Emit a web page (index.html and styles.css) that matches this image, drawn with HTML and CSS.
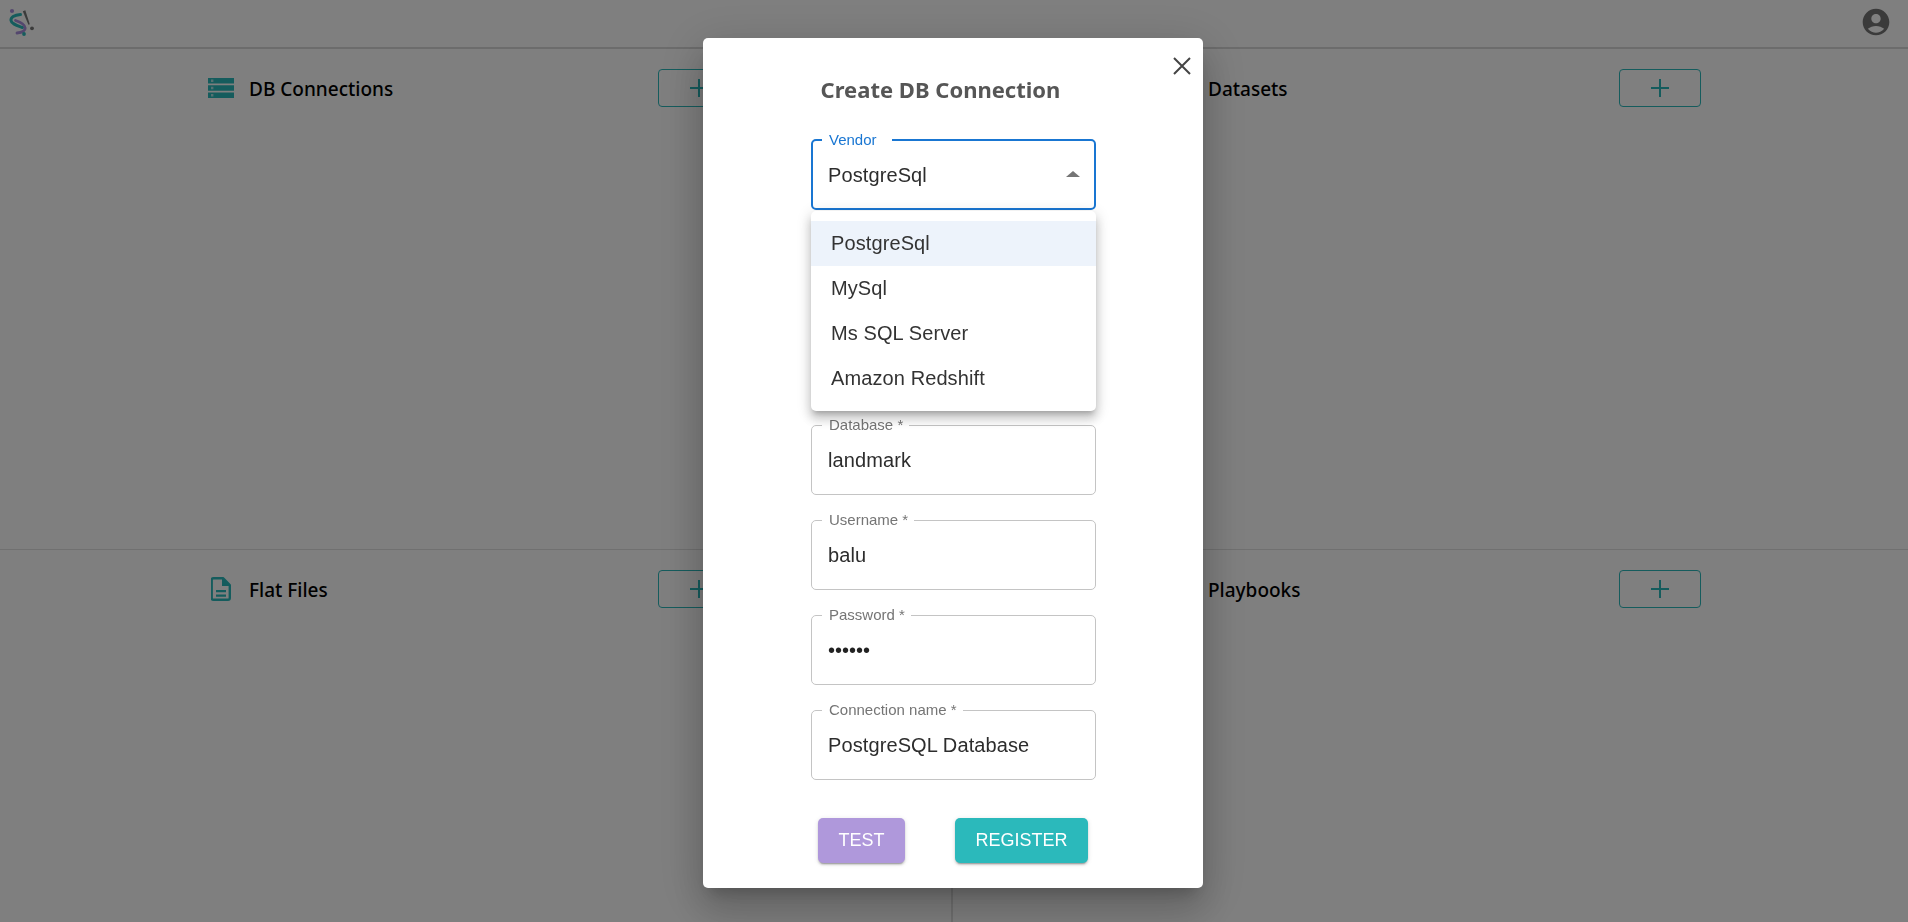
FILE: index.html
```html
<!DOCTYPE html>
<html lang="en">
<head>
<meta charset="utf-8">
<title>DB Connections</title>
<link rel="stylesheet" href="styles.css">
</head>
<body>
<div class="page">
  <header class="topbar">
    <svg class="logo" viewBox="0 0 40 40" width="40" height="40" aria-hidden="true">
      <circle cx="12" cy="11" r="2.100" fill="#a98fdc"/>
      <path d="M20.500 14.500C14 15 10.500 17.500 11 20.500C11.500 24 17 25.500 22.500 27.500" fill="none" stroke="#2bb9bb" stroke-width="3" stroke-linecap="round"/>
      <path d="M15.500 20.500C20 22 25 24.500 25.200 28C25.300 31 21.500 32.500 17 33" fill="none" stroke="#a98fdc" stroke-width="2.800" stroke-linecap="round"/>
      <path d="M22.800 11.300 25.300 10.300 29.800 24.200 28.400 24.700Z" fill="#777"/>
      <circle cx="32" cy="28.300" r="1.900" fill="#777"/>
      <circle cx="24" cy="34" r="1.900" fill="#2bb9bb"/>
    </svg>
    <svg class="avatar" viewBox="0 0 24 24" width="32" height="32" aria-hidden="true">
      <path fill="#757575" d="M12 2C6.480 2 2 6.480 2 12s4.480 10 10 10 10-4.480 10-10S17.520 2 12 2zm0 4c1.930 0 3.500 1.570 3.500 3.500S13.930 13 12 13s-3.500-1.570-3.500-3.500S10.070 6 12 6zm0 14c-2.030 0-4.430-.82-6.140-2.880C7.550 15.800 9.680 15 12 15s4.450.8 6.140 2.120C16.430 19.180 14.030 20 12 20z"/>
    </svg>
  </header>
  <main class="grid">
    <section class="panel panel-left">
      <div class="panel-head">
        <div class="panel-title">
          <svg class="panel-icon" viewBox="0 0 26 20" width="26" height="20" aria-hidden="true">
            <path fill="#2bb9bb" d="M0 0h26v5.400H0zM0 7.300h26v5.400H0zM0 14.600h26V20H0z"/>
            <path fill="#fff" opacity=".6" d="M3 1.600h2.400V4H3zM3 8.800h2.400v2.400H3zM3 16.100h2.400v2.400H3z"/>
          </svg>
          <h2 class="panel-name">DB Connections</h2>
        </div>
        <button class="add" type="button" aria-label="Add DB connection"><svg viewBox="0 0 20 20" width="20" height="20" aria-hidden="true"><path d="M10 1v18M1 10h18" stroke="#2bb9bb" stroke-width="2" fill="none"/></svg></button>
      </div>
    </section>
    <section class="panel panel-right">
      <div class="panel-head">
        <div class="panel-title">
          <span class="panel-icon-space"></span>
          <h2 class="panel-name">Datasets</h2>
        </div>
        <button class="add" type="button" aria-label="Add dataset"><svg viewBox="0 0 20 20" width="20" height="20" aria-hidden="true"><path d="M10 1v18M1 10h18" stroke="#2bb9bb" stroke-width="2" fill="none"/></svg></button>
      </div>
    </section>
    <section class="panel panel-left">
      <div class="panel-head">
        <div class="panel-title">
          <svg class="panel-icon file-icon" viewBox="0 0 20 24" width="20" height="24" aria-hidden="true">
            <path fill="none" stroke="#2bb9bb" stroke-width="2.400" stroke-linejoin="round" d="M2.500 1.200h9.500l6.800 6.800v13a1.800 1.800 0 0 1-1.800 1.800H2.500A1.800 1.800 0 0 1 .7 21V3a1.800 1.800 0 0 1 1.800-1.800z"/>
            <path fill="#2bb9bb" d="M11 1l8 8h-8zM5 13h10v2.200H5zM5 17.500h10v2.200H5z"/>
          </svg>
          <h2 class="panel-name">Flat Files</h2>
        </div>
        <button class="add" type="button" aria-label="Add flat file"><svg viewBox="0 0 20 20" width="20" height="20" aria-hidden="true"><path d="M10 1v18M1 10h18" stroke="#2bb9bb" stroke-width="2" fill="none"/></svg></button>
      </div>
    </section>
    <section class="panel panel-right">
      <div class="panel-head">
        <div class="panel-title">
          <span class="panel-icon-space"></span>
          <h2 class="panel-name">Playbooks</h2>
        </div>
        <button class="add" type="button" aria-label="Add playbook"><svg viewBox="0 0 20 20" width="20" height="20" aria-hidden="true"><path d="M10 1v18M1 10h18" stroke="#2bb9bb" stroke-width="2" fill="none"/></svg></button>
      </div>
    </section>
  </main>
</div>

<div class="backdrop">
  <div class="modal" role="dialog" aria-label="Create DB Connection">
    <button class="close" type="button" aria-label="Close">
      <svg viewBox="0 0 18 18" width="18" height="18" aria-hidden="true"><path d="M1 1l16 16M17 1L1 17" stroke="#444" stroke-width="2" fill="none"/></svg>
    </button>
    <h1 class="modal-title">Create DB Connection</h1>
    <form class="form">
      <div class="select-wrap">
        <fieldset class="field field-focus">
          <legend>Vendor</legend>
          <span class="value">PostgreSql</span>
          <span class="arrow"></span>
        </fieldset>
        <ul class="menu">
          <li class="menu-item menu-item-active">PostgreSql</li>
          <li class="menu-item">MySql</li>
          <li class="menu-item">Ms SQL Server</li>
          <li class="menu-item">Amazon Redshift</li>
        </ul>
      </div>
      <div class="field-covered"></div>
      <div class="field-covered"></div>
      <fieldset class="field"><legend>Database *</legend><span class="value">landmark</span></fieldset>
      <fieldset class="field"><legend>Username *</legend><span class="value">balu</span></fieldset>
      <fieldset class="field"><legend>Password *</legend><span class="value value-dots">••••••</span></fieldset>
      <fieldset class="field"><legend>Connection name *</legend><span class="value">PostgreSQL Database</span></fieldset>
      <div class="actions">
        <button class="btn btn-test" type="button">TEST</button>
        <button class="btn btn-register" type="button">REGISTER</button>
      </div>
    </form>
  </div>
</div>
</body>
</html>
```

FILE: styles.css
```css
* { box-sizing: border-box; }

html, body {
  margin: 0;
  height: 100%;
  overflow: hidden;
  background: #fff;
}

.page {
  height: 922px;
  display: flex;
  flex-direction: column;
  font-family: "Noto Sans", "Open Sans", sans-serif;
}

.topbar {
  height: 49px;
  flex: none;
  display: flex;
  align-items: flex-start;
  justify-content: space-between;
  padding-right: 16px;
  border-bottom: 2px solid #d8d8d8;
}

.logo { display: block; }
.avatar { display: block; margin-top: 6px; }

.grid {
  flex: 1;
  display: grid;
  grid-template-columns: 953px 1fr;
  grid-template-rows: 501px 1fr;
}

.panel { padding-top: 20px; }
.panel-left { border-right: 2px solid #e0e0e0; padding-left: 208px; }
.panel-right { padding-left: 215px; }
.grid > .panel:nth-child(-n+2) { border-bottom: 1px solid #e0e0e0; }

.panel-head {
  width: 532px;
  display: flex;
  align-items: center;
  justify-content: space-between;
}

.panel-right .panel-head { width: 533px; }

.panel-title {
  display: flex;
  align-items: center;
  gap: 15px;
}

.panel-icon { display: block; flex: none; }
.file-icon { margin: 0 3px 0 3px; }
.panel-icon-space { width: 25px; flex: none; }

.panel-name {
  margin: 2px 0 0;
  font-size: 19px;
  font-weight: 500;
  color: #000;
}

.add {
  width: 82px;
  height: 38px;
  padding: 0;
  display: flex;
  align-items: center;
  justify-content: center;
  background: transparent;
  border: 1px solid #2bb9bb;
  border-radius: 4px;
}

.backdrop {
  position: fixed;
  inset: 0;
  background: rgba(0, 0, 0, .5);
  display: flex;
  justify-content: center;
  align-items: flex-start;
  padding: 38px 2px 0 0;
}

.modal {
  position: relative;
  width: 500px;
  height: 850px;
  background: #fff;
  border-radius: 5px;
  padding: 31px 0 0 108px;
  box-shadow: 0 11px 15px -7px rgba(0, 0, 0, .2), 0 24px 38px 3px rgba(0, 0, 0, .14), 0 9px 46px 8px rgba(0, 0, 0, .12);
}

.close {
  position: absolute;
  top: 19px;
  right: 12px;
  padding: 0;
  display: block;
  background: none;
  border: 0;
  line-height: 0;
}

.modal-title {
  margin: 0 0 24px -13px;
  width: 285px;
  text-align: center;
  font-family: "Noto Sans", "Open Sans", sans-serif;
  font-size: 22px;
  font-weight: 700;
  line-height: 40px;
  color: #565656;
  white-space: nowrap;
}

.form {
  width: 285px;
  display: flex;
  flex-direction: column;
  gap: 18px;
  font-family: "Liberation Sans", Arial, sans-serif;
}

.select-wrap { position: relative; }

.field-covered { height: 77px; }

.field {
  position: relative;
  margin: 0;
  min-width: 0;
  height: 77px;
  padding: 0 13px 2px 16px;
  display: block;
  border: 1px solid #c4c4c4;
  border-radius: 5px;
}

.field legend {
  margin-left: -6px;
  padding: 0 6px 0 7px;
  font-size: 15px;
  line-height: 14px;
  color: #757575;
  white-space: nowrap;
}

.value {
  display: block;
  font-size: 20px;
  letter-spacing: .1px;
  line-height: 56px;
  color: #2d2d2d;
  white-space: nowrap;
}

.value-dots {
  letter-spacing: 0;
  color: #222;
}

.field-focus {
  border: 2px solid #1976d2;
  padding: 0 12px 2px 15px;
}

.field-focus legend {
  padding-right: 15px;
  color: #1976d2;
}

.arrow {
  position: absolute;
  right: 14px;
  top: 24px;
  width: 0;
  height: 0;
  border-left: 7px solid transparent;
  border-right: 7px solid transparent;
  border-bottom: 6px solid #757575;
}

.menu {
  position: absolute;
  left: 0;
  right: 0;
  top: 78px;
  z-index: 2;
  margin: 0;
  padding: 10px 0 8px;
  height: 200px;
  list-style: none;
  background: #fff;
  border-radius: 5px;
  box-shadow: 0 5px 5px -3px rgba(0, 0, 0, .2), 0 8px 10px 1px rgba(0, 0, 0, .14), 0 3px 14px 2px rgba(0, 0, 0, .12);
}

.menu-item {
  height: 45px;
  padding-left: 20px;
  font-size: 20px;
  letter-spacing: .1px;
  line-height: 44px;
  color: #333;
}

.menu-item-active { background: #edf3fb; }

.actions {
  display: flex;
  margin-top: 20px;
  padding-left: 7px;
  gap: 50px;
}

.btn {
  height: 45px;
  padding: 0;
  border: 0;
  border-radius: 5px;
  color: #fff;
  font-family: "Liberation Sans", Arial, sans-serif;
  font-size: 18px;
  box-shadow: 0 3px 1px -2px rgba(0, 0, 0, .2), 0 2px 2px 0 rgba(0, 0, 0, .14), 0 1px 5px 0 rgba(0, 0, 0, .12);
}

.btn-test { width: 87px; background: #af98db; }
.btn-register { width: 133px; background: #2bb9bb; }
```
